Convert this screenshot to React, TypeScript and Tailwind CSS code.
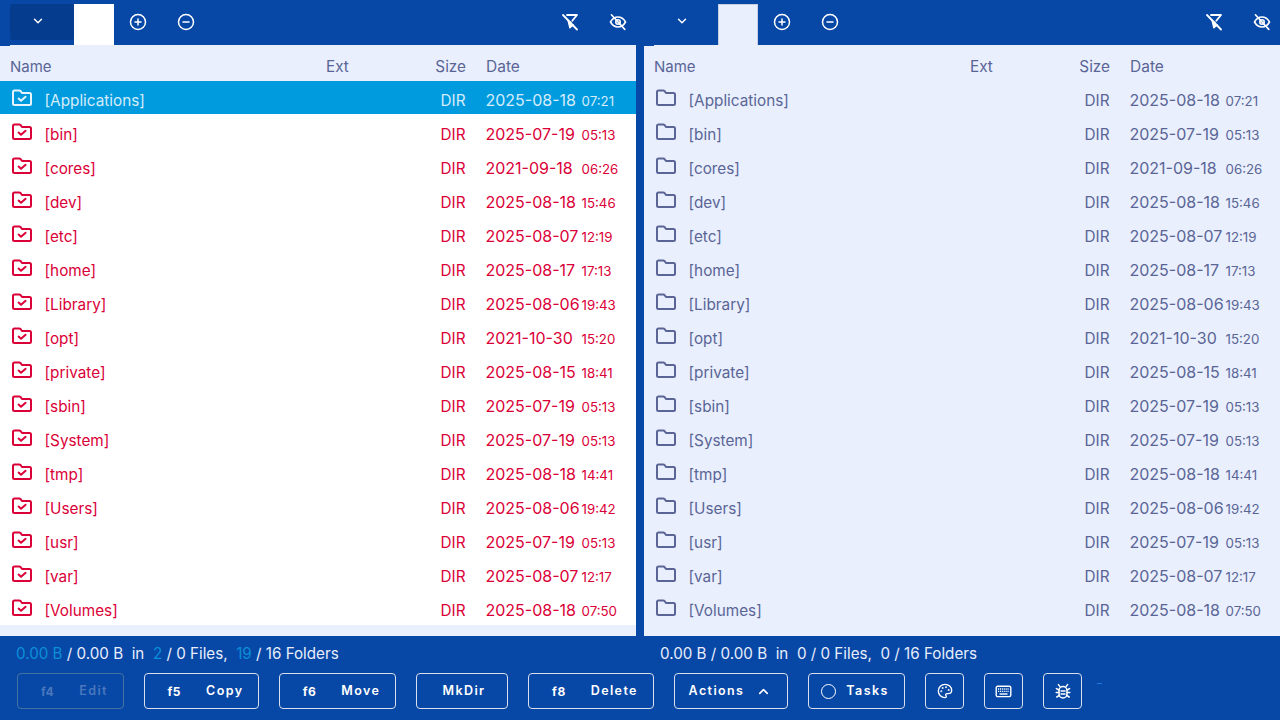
import React from "react";
import { ChevronDown, ChevronUp, CirclePlus, CircleMinus, Palette } from "lucide-react";

const rows: [string, string, string][] = [
  ["Applications", "2025-08-18", "07:21"],
  ["bin", "2025-07-19", "05:13"],
  ["cores", "2021-09-18", "06:26"],
  ["dev", "2025-08-18", "15:46"],
  ["etc", "2025-08-07", "12:19"],
  ["home", "2025-08-17", "17:13"],
  ["Library", "2025-08-06", "19:43"],
  ["opt", "2021-10-30", "15:20"],
  ["private", "2025-08-15", "18:41"],
  ["sbin", "2025-07-19", "05:13"],
  ["System", "2025-07-19", "05:13"],
  ["tmp", "2025-08-18", "14:41"],
  ["Users", "2025-08-06", "19:42"],
  ["usr", "2025-07-19", "05:13"],
  ["var", "2025-08-07", "12:17"],
  ["Volumes", "2025-08-18", "07:50"],
];

function FolderIcon({ check }: { check: boolean }) {
  return (
    <svg width="22" height="20" viewBox="0 0 22 20" fill="none" stroke="currentColor" strokeWidth="2" strokeLinejoin="round" strokeLinecap="round">
      <path d="M2 15.4V3.9C2 3 2.6 2.4 3.5 2.4H8.2C8.8 2.4 9.2 2.6 9.6 3.1L11 5H18.5C19.4 5 20 5.6 20 6.5V15.4C20 16.3 19.4 16.9 18.5 16.9H3.5C2.6 16.9 2 16.3 2 15.4Z" />
      {check && <path d="M7.6 10.6L10 12.8L14.6 8.8" />}
    </svg>
  );
}

function FilterOffIcon() {
  return (
    <svg width="18" height="18" viewBox="0 0 18 18" fill="none" stroke="currentColor" strokeWidth="1.8" strokeLinecap="round" strokeLinejoin="round">
      <path d="M6 2H16L11.3 7.8" />
      <path d="M2 2L16 16.5" />
      <path d="M7.3 7.5L9 14.5L9.6 9.5" fill="currentColor" />
      <path d="M9 14.2L12 12" fill="currentColor" />
    </svg>
  );
}

function EyeOffIcon() {
  return (
    <svg width="18" height="18" viewBox="0 0 18 18" fill="none" stroke="currentColor" strokeWidth="1.6" strokeLinecap="round">
      <path d="M1.5 9C3.4 5.6 6 4 9 4C12 4 14.6 5.6 16.5 9C14.6 12.4 12 14 9 14C6 14 3.4 12.4 1.5 9Z" />
      <circle cx="9" cy="9" r="2.2" />
      <path d="M2.4 1.8L15.8 16.4" />
    </svg>
  );
}

function KeyboardIcon() {
  return (
    <svg width="17" height="13" viewBox="0 0 17 13" fill="none" stroke="currentColor" strokeWidth="1.4">
      <rect x="1.2" y="1.2" width="14.6" height="10.4" rx="1.6" />
      <path d="M3 4H14" strokeDasharray="1.1 0.8" />
      <path d="M3 6.4H14" strokeDasharray="1.1 0.8" />
      <path d="M4.5 9H12.5" />
    </svg>
  );
}

function BugIcon() {
  return (
    <svg width="16" height="17" viewBox="0 0 16 17" fill="none" stroke="currentColor" strokeWidth="1.5" strokeLinecap="round">
      <rect x="4" y="3.6" width="8" height="11.4" rx="4" />
      <path d="M6 8H10M6 11H10" />
      <path d="M4.8 3.4L3.4 1.6M11.2 3.4L12.6 1.6M4 7L1.4 5.6M12 7L14.6 5.6M4 9.6H1.2M12 9.6H14.8M4.4 12.4L1.8 14M11.6 12.4L14.2 14" />
    </svg>
  );
}

function Panel({ active }: { active: boolean }) {
  return (
    <div className="flex w-[636px] flex-col">
      <div className="flex h-[45px] items-start bg-[#0747a6]">
        <div className={`mt-1 ml-[10px] flex h-9 w-16 items-center rounded-[3px] pl-[21px] pb-[2px] text-white ${active ? "bg-[#063c8d]" : ""}`}>
          <ChevronDown size={14} strokeWidth={2.5} />
        </div>
        <div className={`mt-1 h-[41px] w-10 ${active ? "bg-white" : "border-x border-t border-[#c5cfe0] bg-[#e9effd]"}`} />
        <div className="ml-[14px] mt-1 flex h-9 w-5 items-center justify-center text-white"><CirclePlus size={18} strokeWidth={2} /></div>
        <div className="ml-7 mt-1 flex h-9 w-5 items-center justify-center text-white"><CircleMinus size={18} strokeWidth={2} /></div>
        <div className="ml-auto mt-1 flex h-9 items-center gap-[30px] pr-[9px] text-white">
          <FilterOffIcon />
          <EyeOffIcon />
        </div>
      </div>
      <div className="flex h-px bg-[#0747a6]"><div className="ml-[10px] flex-1 bg-[#e9effd]" /></div>
      <div className={`flex h-[590px] flex-col bg-[#e9effd] ${active ? "text-[#da0037]" : "text-[#5a6596]"}`}>
        <div className="flex h-[35px] shrink-0 items-start pl-[10px] pt-[10px] text-[15.3px] leading-[22px] text-[#5a6596]">
          <div className="w-[316px] text-[15px]">Name</div>
          <div className="w-[80px]">Ext</div>
          <div className="w-[60px] text-right">Size</div>
          <div className="ml-5 text-[15.5px]">Date</div>
        </div>
        <div className={active ? "bg-white" : ""}>
          {rows.map(([name, date, time], i) => {
            const selected = active && i === 0;
            return (
              <div key={name} className={`flex h-[34px] items-start pl-[11px] text-[15.3px] leading-[22px] ${selected ? "border-b border-white bg-[#009bdf] text-[#d5ecfa]" : ""}`}>
                <div className={`w-[33.5px] shrink-0 pt-[7px] ${selected ? "text-[#e8f4fc]" : ""}`}><FolderIcon check={active} /></div>
                <div className="w-[281px] pt-[9px]">[{name}]</div>
                <div className="w-[80px]" />
                <div className="w-[60px] pt-[9px] text-right">DIR</div>
                <div className="ml-5 w-[96px] whitespace-nowrap pt-2 text-[16px]">{date}</div>
                <div className="pt-[9px] text-[13.3px]">{time}</div>
              </div>
            );
          })}
        </div>
      </div>
    </div>
  );
}

function Btn({ k, label, w, disabled }: { k?: string; label?: string; w: string; disabled?: boolean }) {
  return (
    <div className={`flex h-9 items-center justify-center rounded border pl-1 pt-px text-[12.5px] font-semibold tracking-[1.4px] ${k ? "pl-2" : ""} ${w} ${disabled ? "border-[#44739f] text-[#4a78bd]" : "border-[#d8dfea] text-white"}`}>
      {k && <span className="mr-[25px] text-[12px] font-bold tracking-[0.5px]">{k}</span>}
      <span>{label}</span>
    </div>
  );
}

export default function App() {
  const blue = "text-[#0a8fd8]";
  const box = "flex h-9 items-center justify-center rounded border border-[#d8dfea] text-white";
  return (
    <div className="flex h-[720px] w-[1280px] flex-col overflow-hidden bg-[#0747a6] font-['Inter',sans-serif]">
      <div className="flex justify-between">
        <Panel active />
        <Panel active={false} />
      </div>
      <div className="flex h-[37px] shrink-0 items-center text-[15.2px] text-[#e8eefb]">
        <div className="w-[644px] whitespace-pre pl-4">
          <span className={blue}>0.00 B</span> / 0.00 B{"  "}in{"  "}<span className={blue}>2</span> / 0 Files,{"  "}<span className={blue}>19</span> / 16 Folders
        </div>
        <div className="whitespace-pre pl-4">0.00 B / 0.00 B{"  "}in{"  "}0 / 0 Files,{"  "}0 / 16 Folders</div>
      </div>
      <div className="flex items-center gap-5 pl-[17px]">
        <Btn k="f4" label="Edit" w="w-[107px]" disabled />
        <Btn k="f5" label="Copy" w="w-[115px]" />
        <Btn k="f6" label="Move" w="w-[117px]" />
        <Btn label="MkDir" w="w-[92px]" />
        <Btn k="f8" label="Delete" w="w-[126px]" />
        <div className={`${box} w-[114px] gap-[12px] pr-[2px] pt-px text-[12.5px] font-semibold tracking-[1.4px]`}>
          Actions <ChevronUp size={15} strokeWidth={2.5} />
        </div>
        <div className={`${box} w-[97px] gap-[10px] pr-[3px] pt-px text-[12.5px] font-semibold tracking-[1.4px]`}>
          <span className="h-[15px] w-[15px] rounded-full border-[1.5px] border-white" />Tasks
        </div>
        <div className={`${box} w-[39px]`}><Palette size={16} strokeWidth={2} /></div>
        <div className={`${box} w-[39px]`}><KeyboardIcon /></div>
        <div className={`${box} w-[39px]`}><BugIcon /></div>
        <div className="-ml-[5px] mt-[10px] h-px w-[5px] self-start bg-[#1e78e0]" />
      </div>
    </div>
  );
}
